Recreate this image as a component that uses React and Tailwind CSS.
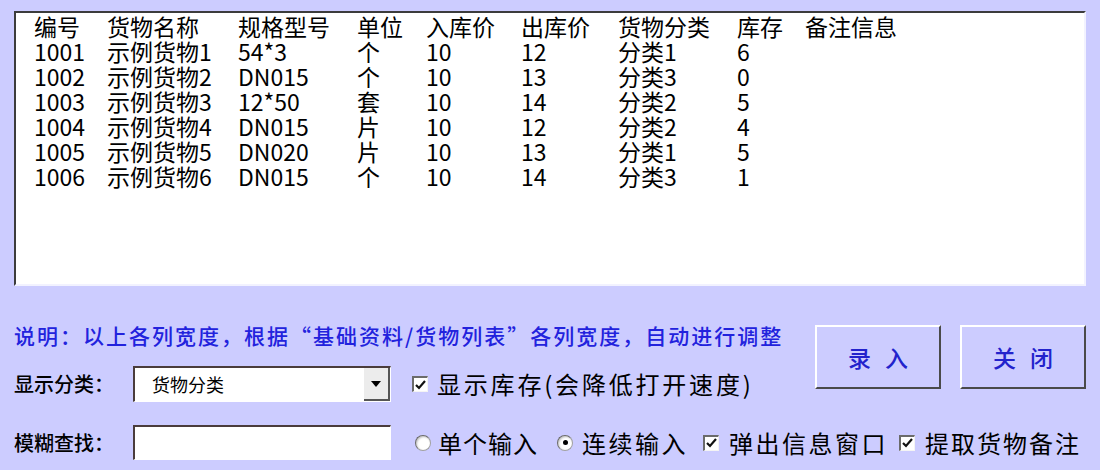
import React from 'react';

const rows = [
  ['1001', '示例货物1', '54*3', '个', '10', '12', '分类1', '6'],
  ['1002', '示例货物2', 'DN015', '个', '10', '13', '分类3', '0'],
  ['1003', '示例货物3', '12*50', '套', '10', '14', '分类2', '5'],
  ['1004', '示例货物4', 'DN015', '片', '10', '12', '分类2', '4'],
  ['1005', '示例货物5', 'DN020', '片', '10', '13', '分类1', '5'],
  ['1006', '示例货物6', 'DN015', '个', '10', '14', '分类3', '1'],
];

const headers = ['编号', '货物名称', '规格型号', '单位', '入库价', '出库价', '货物分类', '库存', '备注信息'];

const gridCols = 'grid grid-cols-[73px_131px_119px_69px_95px_97px_119px_68px_1fr]';

const CheckBox = ({ checked }) => (
  <span className="w-[16px] h-[16px] bg-white border-t-2 border-l-2 border-[#6b6b6b] border-r border-b border-r-[#f4f4f4] border-b-[#f4f4f4] flex items-center justify-center shrink-0">
    {checked && (
      <svg width="11" height="10" viewBox="0 0 11 10">
        <path d="M1 5 L4 8 L10 1" fill="none" stroke="#111" strokeWidth="2.2" />
      </svg>
    )}
  </span>
);

const Radio = ({ checked }) => (
  <span className="w-[16px] h-[16px] rounded-full bg-white border border-[#a0a0a0] border-t-[#6a6a6a] border-l-[#6a6a6a] shadow-[inset_1px_1px_2px_rgba(0,0,0,0.25)] flex items-center justify-center shrink-0">
    {checked && <span className="w-[5px] h-[5px] rounded-full bg-black" />}
  </span>
);

const Button = ({ children }) => (
  <button className="w-[126px] h-[64px] bg-[#ccccff] border-2 border-t-white border-l-white border-r-[#4a4a4a] border-b-[#4a4a4a] text-[#2222cc] text-[23px] font-medium tracking-[14px] pl-[14px]">
    {children}
  </button>
);

export default function App() {
  return (
    <div className="w-[1100px] h-[470px] bg-[#ccccff] pt-[11px] pl-[14px] pr-[14px] font-['Noto_Sans_CJK_SC',sans-serif] text-black overflow-hidden">
      {/* list box */}
      <div className="h-[275px] w-[1072px] bg-white border-t-2 border-l-2 border-[#3c3c3c] border-r-2 border-b-2 border-r-[#f2f2ff] border-b-[#f2f2ff] pl-[18px] pt-px text-[23px] leading-[25px]">
        <div className={gridCols}>
          {headers.map((h) => (
            <div key={h} className="whitespace-nowrap">{h}</div>
          ))}
        </div>
        {rows.map((r) => (
          <div key={r[0]} className={gridCols}>
            {r.map((c, i) => (
              <div key={i} className="whitespace-nowrap">{c}</div>
            ))}
            <div />
          </div>
        ))}
      </div>

      {/* bottom controls */}
      <div className="flex mt-[34px]">
        <div className="flex-1 flex flex-col">
          <div className="h-[30px] leading-[30px] text-[21px] font-medium tracking-[2px] text-[#2222dd] whitespace-nowrap">
            说明：以上各列宽度，根据“基础资料/货物列表”各列宽度，自动进行调整
          </div>
          <div className="flex items-center mt-[16px] h-[36px]">
            <span className="w-[119px] shrink-0 text-[20px] font-medium">显示分类：</span>
            <div className="w-[258px] shrink-0 h-[36px] bg-white border-t-2 border-l-2 border-[#4a3c3c] border-r border-b border-r-white border-b-white flex items-center">
              <span className="flex-1 pl-[17px] text-[18px]">货物分类</span>
              <span className="w-[26px] h-full bg-[#ececec] border-r-2 border-b-2 border-[#555] flex items-center justify-center">
                <svg width="10" height="6" viewBox="0 0 10 6">
                  <path d="M0 0 H10 L5 6 Z" fill="#000" />
                </svg>
              </span>
            </div>
            <span className="ml-[21px]"><CheckBox checked /></span>
            <span className="ml-[9px] text-[24px] tracking-[2.8px] whitespace-nowrap">显示库存(会降低打开速度)</span>
          </div>
        </div>
        <div className="flex gap-[19px] pt-[5px]">
          <Button>录入</Button>
          <Button>关闭</Button>
        </div>
      </div>

      <div className="flex items-center mt-[23px] h-[35px]">
        <span className="w-[119px] shrink-0 text-[20px] font-medium">模糊查找：</span>
        <div className="w-[258px] shrink-0 h-[35px] bg-white border-t-2 border-l-2 border-[#4a3c3c] border-r border-b border-r-white border-b-white" />
        <span className="ml-[24px]"><Radio /></span>
        <span className="ml-[7px] text-[24px] tracking-[1px] whitespace-nowrap">单个输入</span>
        <span className="ml-[19px]"><Radio checked /></span>
        <span className="ml-[9px] text-[24px] tracking-[2.5px] whitespace-nowrap">连续输入</span>
        <span className="ml-[15px]"><CheckBox checked /></span>
        <span className="ml-[10px] text-[24px] tracking-[2.5px] whitespace-nowrap">弹出信息窗口</span>
        <span className="ml-[11px]"><CheckBox checked /></span>
        <span className="ml-[10px] text-[24px] tracking-[2px] whitespace-nowrap">提取货物备注</span>
      </div>
    </div>
  );
}
